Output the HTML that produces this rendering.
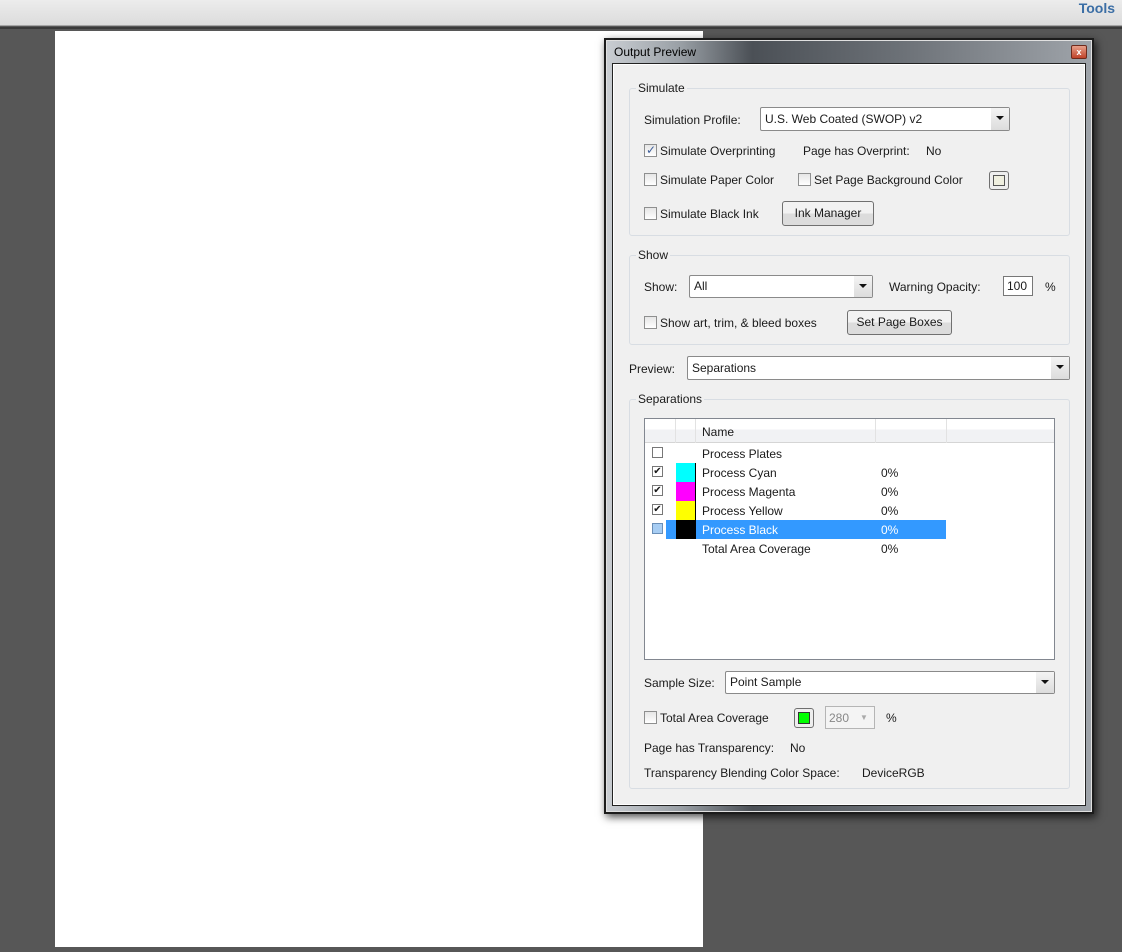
<!DOCTYPE html>
<html><head><style>
*{margin:0;padding:0;box-sizing:border-box}
body{width:1122px;height:952px;background:#575757;position:relative;overflow:hidden;font-family:"Liberation Sans",sans-serif;font-size:12px;color:#1a1a1a}
.a{position:absolute}
.t{position:absolute;white-space:nowrap;line-height:14px}
.grp{position:absolute;border:1px solid #d8dde3;border-radius:3px}
.gl{position:absolute;background:#f0f0f0;padding:0 2px;line-height:14px}
.cb{position:absolute;width:13px;height:13px;border:1px solid #8e8f8f;background:linear-gradient(#e6e6e6,#fff)}
.dd{position:absolute;border:1px solid #8a8a8a;border-radius:2px;background:#fff}
.dd i{position:absolute;right:0;top:0;bottom:0;width:18px;background:linear-gradient(#f4f4f4,#dcdcdc)}
.dd i:after{content:"";position:absolute;left:5px;top:8px;border:4px solid transparent;border-top:4px solid #111;border-bottom:0}
.btn{position:absolute;border:1px solid #707070;border-radius:3px;background:linear-gradient(#f2f2f2 50%,#dcdcdc 50%);text-align:center;line-height:22px}
</style></head><body>
<div class="a" style="left:0;top:0;width:1122px;height:26px;background:linear-gradient(#ececec,#dcdcdc);border-bottom:1px solid #a5a5a5"></div>
<div class="t" style="right:7px;top:0;font-weight:bold;font-size:14px;color:#3b6ea5;line-height:16px">Tools</div>
<div class="a" style="left:0;top:27px;width:1122px;height:2px;background:#3a3a3a"></div>
<div class="a" style="left:55px;top:31px;width:648px;height:916px;background:#fff"></div>
<!-- dialog -->
<div class="a" style="left:604px;top:38px;width:490px;height:776px;background:#1c1c1c;box-shadow:2px 3px 8px rgba(0,0,0,.7)"></div>
<div class="a" style="left:606px;top:40px;width:486px;height:772px;background:linear-gradient(90deg,#c9cdd2 0%,#9aa0a6 15%,#4b5056 30%,#6b7076 60%,#9fa4aa 100%);border:1px solid #e0e0e0"></div>
<div class="t" style="left:614px;top:45px;color:#000">Output Preview</div>
<div class="a" style="left:1071px;top:45px;width:16px;height:14px;background:linear-gradient(#e8a08a,#c0432a);border:1px solid #6e2a1c;border-radius:2px;color:#fff;font-size:9px;font-weight:bold;text-align:center;line-height:12px">x</div>
<div class="a" style="left:612px;top:63px;width:474px;height:743px;background:#f0f0f0;border:1px solid #222;box-shadow:0 0 0 1px #fff inset"></div>
<!-- Simulate -->
<div class="grp" style="left:629px;top:88px;width:441px;height:148px"></div>
<div class="gl" style="left:636px;top:81px">Simulate</div>
<div class="t" style="left:644px;top:113px">Simulation Profile:</div>
<div class="dd" style="left:760px;top:107px;width:250px;height:24px"><span class="t" style="left:4px;top:4px">U.S. Web Coated (SWOP) v2</span><i></i></div>
<div class="cb" style="left:644px;top:144px"><span class="t" style="left:1px;top:-2px;color:#3f5f9a;font-size:12px">✓</span></div>
<div class="t" style="left:660px;top:144px">Simulate Overprinting</div>
<div class="t" style="left:803px;top:144px">Page has Overprint:</div>
<div class="t" style="left:926px;top:144px">No</div>
<div class="cb" style="left:644px;top:173px"></div>
<div class="t" style="left:660px;top:173px">Simulate Paper Color</div>
<div class="cb" style="left:798px;top:173px"></div>
<div class="t" style="left:814px;top:173px">Set Page Background Color</div>
<div class="a" style="left:989px;top:171px;width:20px;height:19px;border:1px solid #707070;border-radius:3px;background:#eee"><div class="a" style="left:3px;top:3px;width:12px;height:11px;background:#efefdf;border:1px solid #555"></div></div>
<div class="cb" style="left:644px;top:207px"></div>
<div class="t" style="left:660px;top:207px">Simulate Black Ink</div>
<div class="btn" style="left:782px;top:201px;width:92px;height:25px">Ink Manager</div>
<!-- Show -->
<div class="grp" style="left:629px;top:255px;width:441px;height:90px"></div>
<div class="gl" style="left:636px;top:248px">Show</div>
<div class="t" style="left:644px;top:280px">Show:</div>
<div class="dd" style="left:689px;top:275px;width:184px;height:23px"><span class="t" style="left:4px;top:3px">All</span><i></i></div>
<div class="t" style="left:889px;top:280px">Warning Opacity:</div>
<div class="a" style="left:1003px;top:276px;width:30px;height:20px;border:1px solid #777;background:#fff"><span class="t" style="left:3px;top:2px">100</span></div>
<div class="t" style="left:1045px;top:280px">%</div>
<div class="cb" style="left:644px;top:316px"></div>
<div class="t" style="left:660px;top:316px">Show art, trim, &amp; bleed boxes</div>
<div class="btn" style="left:847px;top:310px;width:105px;height:25px">Set Page Boxes</div>
<div class="t" style="left:629px;top:362px">Preview:</div>
<div class="dd" style="left:687px;top:356px;width:383px;height:24px"><span class="t" style="left:4px;top:4px">Separations</span><i></i></div>
<!-- Separations -->
<div class="grp" style="left:629px;top:399px;width:441px;height:390px"></div>
<div class="gl" style="left:636px;top:392px">Separations</div>
<div class="a" style="left:644px;top:418px;width:411px;height:242px;border:1px solid #828790;background:#fff"></div>
<div class="a" style="left:645px;top:419px;width:409px;height:24px;background:linear-gradient(#fff 45%,#f1f2f4 45%);border-bottom:1px solid #d5d5d5"></div>
<div class="a" style="left:675px;top:419px;width:1px;height:24px;background:#e2e2e2"></div>
<div class="a" style="left:695px;top:419px;width:1px;height:24px;background:#e2e2e2"></div>
<div class="a" style="left:875px;top:419px;width:1px;height:24px;background:#e2e2e2"></div>
<div class="a" style="left:946px;top:419px;width:1px;height:24px;background:#e2e2e2"></div>
<div class="t" style="left:702px;top:425px">Name</div>
<div class="a" style="left:666px;top:520px;width:280px;height:19px;background:#3399ff"></div>
<div class="a" style="left:652px;top:447px;width:11px;height:11px;border:1px solid #777;background:#fff"></div>
<div class="a" style="left:652px;top:466px;width:11px;height:11px;border:1px solid #777;background:#fff;font-size:10px;line-height:9px;text-align:center">✔</div>
<div class="a" style="left:652px;top:485px;width:11px;height:11px;border:1px solid #777;background:#fff;font-size:10px;line-height:9px;text-align:center">✔</div>
<div class="a" style="left:652px;top:504px;width:11px;height:11px;border:1px solid #777;background:#fff;font-size:10px;line-height:9px;text-align:center">✔</div>
<div class="a" style="left:652px;top:523px;width:11px;height:11px;border:1px solid #6a8fb8;background:#a7cdf3"></div>
<div class="a" style="left:676px;top:463px;width:20px;height:19px;background:#0ff;border-right:1px solid #000"></div>
<div class="a" style="left:676px;top:482px;width:20px;height:19px;background:#f0f;border-right:1px solid #000"></div>
<div class="a" style="left:676px;top:501px;width:20px;height:19px;background:#ff0;border-right:1px solid #000"></div>
<div class="a" style="left:676px;top:520px;width:20px;height:19px;background:#000"></div>
<div class="t" style="left:702px;top:447px">Process Plates</div>
<div class="t" style="left:702px;top:466px">Process Cyan</div><div class="t" style="left:881px;top:466px">0%</div>
<div class="t" style="left:702px;top:485px">Process Magenta</div><div class="t" style="left:881px;top:485px">0%</div>
<div class="t" style="left:702px;top:504px">Process Yellow</div><div class="t" style="left:881px;top:504px">0%</div>
<div class="t" style="left:702px;top:523px;color:#fff">Process Black</div><div class="t" style="left:881px;top:523px;color:#fff">0%</div>
<div class="t" style="left:702px;top:542px">Total Area Coverage</div><div class="t" style="left:881px;top:542px">0%</div>
<div class="t" style="left:644px;top:676px">Sample Size:</div>
<div class="dd" style="left:725px;top:671px;width:330px;height:23px"><span class="t" style="left:4px;top:3px">Point Sample</span><i></i></div>
<div class="cb" style="left:644px;top:711px"></div>
<div class="t" style="left:660px;top:711px">Total Area Coverage</div>
<div class="a" style="left:794px;top:708px;width:20px;height:20px;border:1px solid #707070;border-radius:3px;background:#eee"><div class="a" style="left:3px;top:3px;width:12px;height:12px;background:#0f0;border:1px solid #333"></div></div>
<div class="a" style="left:825px;top:706px;width:50px;height:23px;border:1px solid #b5b5b5;background:#f4f4f4"><span class="t" style="left:3px;top:4px;color:#888">280</span><span class="t" style="left:34px;top:4px;color:#aaa;font-size:8px">▼</span></div>
<div class="t" style="left:886px;top:711px">%</div>
<div class="t" style="left:644px;top:741px">Page has Transparency:</div>
<div class="t" style="left:790px;top:741px">No</div>
<div class="t" style="left:644px;top:766px">Transparency Blending Color Space:</div>
<div class="t" style="left:862px;top:766px">DeviceRGB</div>
</body></html>
